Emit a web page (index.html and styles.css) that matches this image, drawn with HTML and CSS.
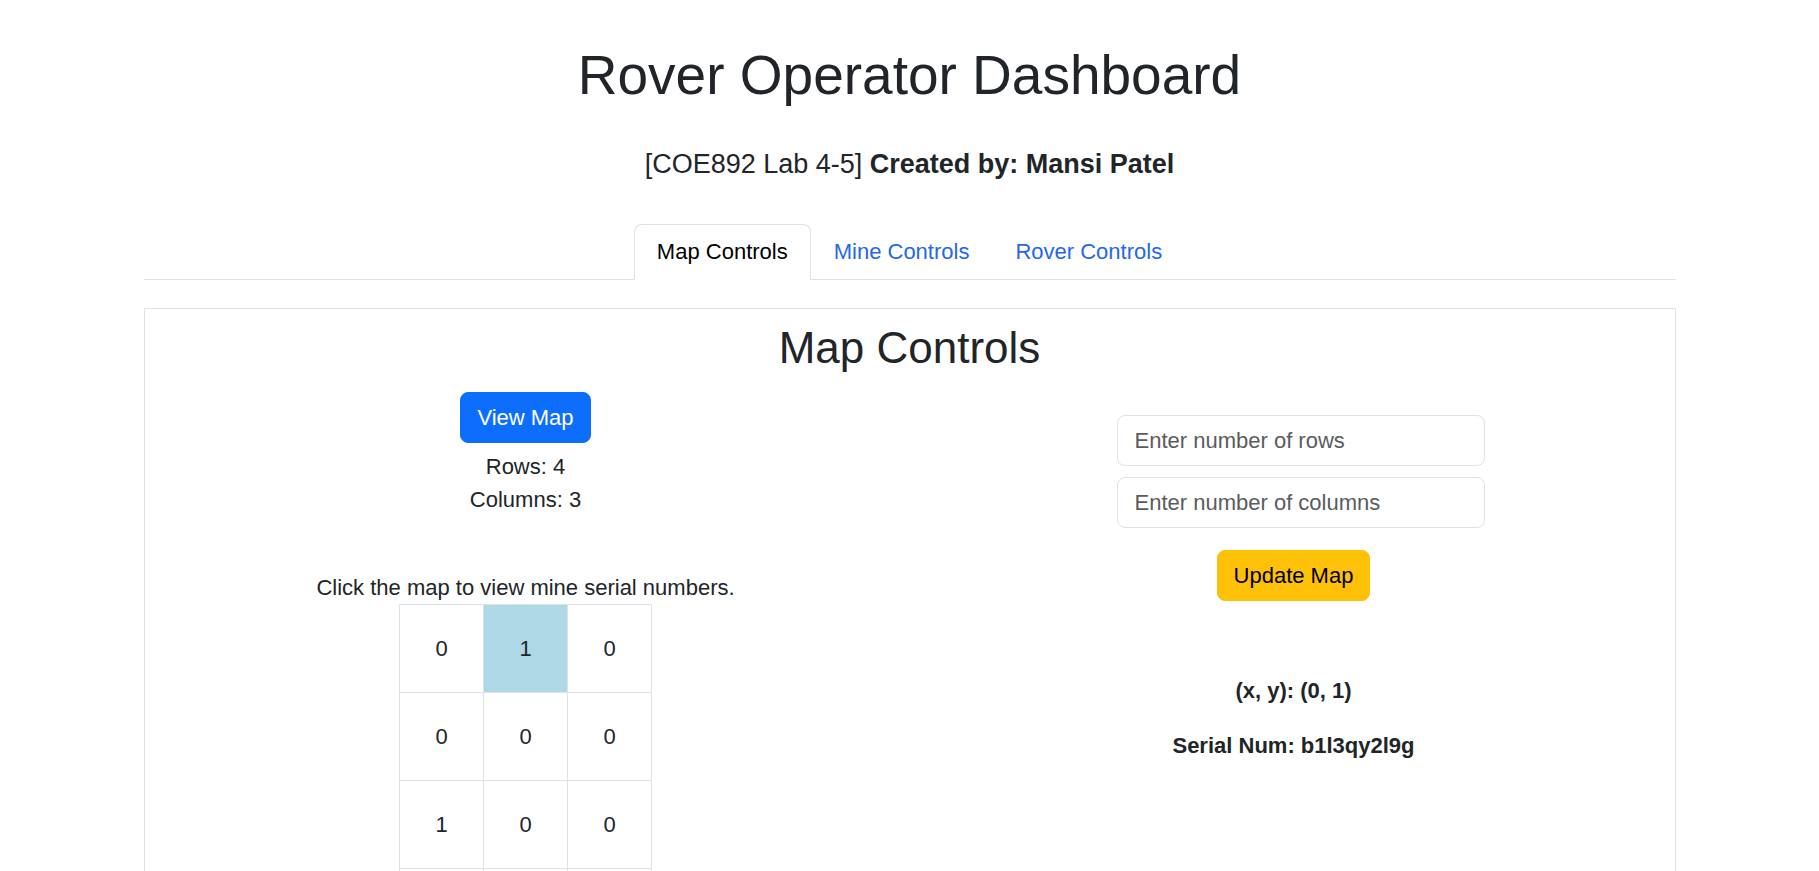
FILE: index.html
```html
<!DOCTYPE html>
<html lang="en">
<head>
<meta charset="utf-8">
<meta name="viewport" content="width=device-width, initial-scale=1">
<title>Rover Operator Dashboard</title>
<link rel="stylesheet" href="styles.css">
</head>
<body>
<main class="container">
  <header class="page-header">
    <h1 class="page-title">Rover Operator Dashboard</h1>
    <p class="byline">[COE892 Lab 4-5] <strong>Created by: Mansi Patel</strong></p>
  </header>
  <nav class="tabs" aria-label="Controls">
    <a class="tab tab-active" href="#map" aria-current="page">Map Controls</a>
    <a class="tab" href="#mine">Mine Controls</a>
    <a class="tab" href="#rover">Rover Controls</a>
  </nav>
  <section class="panel" id="map">
    <h2 class="panel-title">Map Controls</h2>
    <div class="columns">
      <div class="column">
        <button class="btn btn-primary" type="button">View Map</button>
        <div class="map-size">
          <div>Rows: 4</div>
          <div>Columns: 3</div>
        </div>
        <div>Click the map to view mine serial numbers.</div>
        <table class="map">
          <tbody>
            <tr><td>0</td><td class="selected">1</td><td>0</td></tr>
            <tr><td>0</td><td>0</td><td>0</td></tr>
            <tr><td>1</td><td>0</td><td>0</td></tr>
            <tr><td></td><td></td><td></td></tr>
          </tbody>
        </table>
      </div>
      <div class="column">
        <form class="map-form">
          <div class="fields">
            <input class="field" type="text" aria-label="Number of rows" placeholder="Enter number of rows">
            <input class="field" type="text" aria-label="Number of columns" placeholder="Enter number of columns">
          </div>
          <button class="btn btn-warning" type="button">Update Map</button>
        </form>
        <div class="mine-info">
          <div>(x, y): (0, 1)</div>
          <div>Serial Num: b1l3qy2l9g</div>
        </div>
      </div>
    </div>
  </section>
</main>
</body>
</html>
```
FILE: styles.css
```css
*,
*::before,
*::after {
  box-sizing: border-box;
}

html {
  scrollbar-width: none;
}

body {
  margin: 0;
  background: #fff;
  color: #212529;
  font-family: "Liberation Sans", Arial, sans-serif;
  font-size: 22px;
  line-height: 33px;
}

.container {
  max-width: 1532px;
  margin: 0 auto;
  padding-top: 42px;
}

.page-header {
  text-align: center;
}

.page-title {
  margin: 0 0 40px;
  font-size: 55px;
  font-weight: 400;
  line-height: 66px;
}

.byline {
  margin: 0 0 43px;
  font-size: 27px;
}

.tabs {
  display: flex;
  justify-content: center;
  border-bottom: 1px solid #dee2e6;
}

.tab {
  margin-bottom: -1px;
  padding: 10px 22px 11px;
  border: 1px solid transparent;
  border-radius: 8px 8px 0 0;
  color: #2468e8;
  text-decoration: none;
}

.tab-active {
  border-color: #dee2e6 #dee2e6 #fff;
  background: #fff;
  color: #000;
}

.panel {
  margin-top: 28px;
  padding-top: 12px;
  border: 1px solid #dee2e6;
  text-align: center;
}

.panel-title {
  margin: 0 0 17px;
  font-size: 44px;
  font-weight: 400;
  line-height: 54px;
}

.columns {
  display: grid;
  grid-template-columns: 1fr 1fr;
  column-gap: 6px;
}

.column {
  display: flex;
  flex-direction: column;
  align-items: center;
}

.btn {
  padding: 8px 16px;
  border: 1px solid;
  border-radius: 8px;
  font: inherit;
}

.btn-primary {
  border-color: #0d6efd;
  background: #0d6efd;
  color: #fff;
}

.btn-warning {
  border-color: #ffc107;
  background: #ffc107;
  color: #000;
}

.map-size {
  margin: 7px 0 55px;
}

.map {
  border-collapse: collapse;
}

.map td {
  width: 84px;
  height: 88px;
  padding: 0;
  border: 1px solid #dee2e6;
}

.map .selected {
  background: #add8e6;
}

.map-form {
  display: flex;
  flex-direction: column;
  align-items: center;
  gap: 22px;
  padding-top: 23px;
}

.fields {
  display: flex;
  flex-direction: column;
  gap: 11px;
  padding-left: 14px;
}

.field {
  width: 368px;
  padding: 8px 17px;
  border: 1px solid #dee2e6;
  border-radius: 8px;
  background: #fff;
  color: #212529;
  font: inherit;
}

.field::placeholder {
  color: #595c5f;
  opacity: 1;
}

.mine-info {
  display: grid;
  gap: 22px;
  margin-top: 73px;
  font-weight: 700;
}
```
